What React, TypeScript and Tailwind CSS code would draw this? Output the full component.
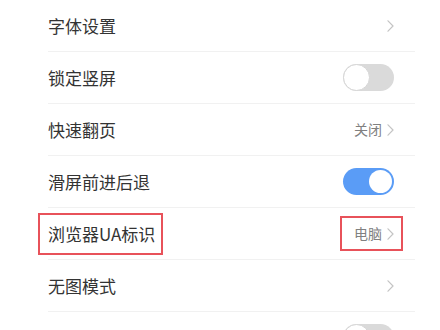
import React from 'react';

type Row = {
  label: string;
  kind: 'link' | 'switch';
  value?: string;
  on?: boolean;
  mark?: boolean;
};

const ROWS: Row[] = [
  { label: '字体设置', kind: 'link' },
  { label: '锁定竖屏', kind: 'switch', on: false },
  { label: '快速翻页', kind: 'link', value: '关闭' },
  { label: '滑屏前进后退', kind: 'switch', on: true },
  { label: '浏览器UA标识', kind: 'link', value: '电脑', mark: true },
  { label: '无图模式', kind: 'link' },
  { label: '全屏模式', kind: 'switch', on: false },
];

const Chevron = () => (
  <svg width="7" height="12" viewBox="0 0 7 12" fill="none" className="ml-[5px]">
    <path d="M1 0.8 L6 6 L1 11.2" stroke="#c4c4c4" strokeWidth="1.2" strokeLinecap="round" strokeLinejoin="round" />
  </svg>
);

const Toggle = ({ on }: { on?: boolean }) =>
  on ? (
    <div className="w-[51px] h-[27px] rounded-full bg-[#5a9cf6] flex items-center justify-end p-[2px]">
      <div className="w-[23px] h-[23px] rounded-full bg-white" />
    </div>
  ) : (
    <div className="w-[51px] h-[27px] rounded-full bg-[#dadada] flex items-center">
      <div className="w-[27px] h-[27px] rounded-full bg-white border border-[#d6d6d6]" />
    </div>
  );

export default function App() {
  return (
    <div
      className="w-[440px] h-[330px] overflow-hidden bg-white pl-[48px] pr-[25px]"
      style={{ fontFamily: '"Noto Sans CJK SC", "Noto Sans", sans-serif' }}
    >
      {ROWS.map((row, i) => (
        <div
          key={i}
          className="h-[52px] flex items-center justify-between border-b border-[#f1f1f1] pr-[21px]"
        >
          {row.mark ? (
            <span className="-ml-[10px] pl-[8px] pr-[6px] h-[42px] flex items-center border-2 border-[#e8525a] text-[17px] text-[#333333]">
              {row.label}
            </span>
          ) : (
            <span className="text-[17px] text-[#333333]">{row.label}</span>
          )}

          {row.kind === 'switch' ? (
            <Toggle on={row.on} />
          ) : row.mark ? (
            <span className="-mr-[9px] pr-[7px] -ml-[14px] pl-[12px] h-[35px] flex items-center border-2 border-[#e8525a]">
              <span className="text-[14px] text-[#808080]">{row.value}</span>
              <Chevron />
            </span>
          ) : (
            <span className="flex items-center">
              {row.value && <span className="text-[14px] text-[#808080]">{row.value}</span>}
              <Chevron />
            </span>
          )}
        </div>
      ))}
    </div>
  );
}
